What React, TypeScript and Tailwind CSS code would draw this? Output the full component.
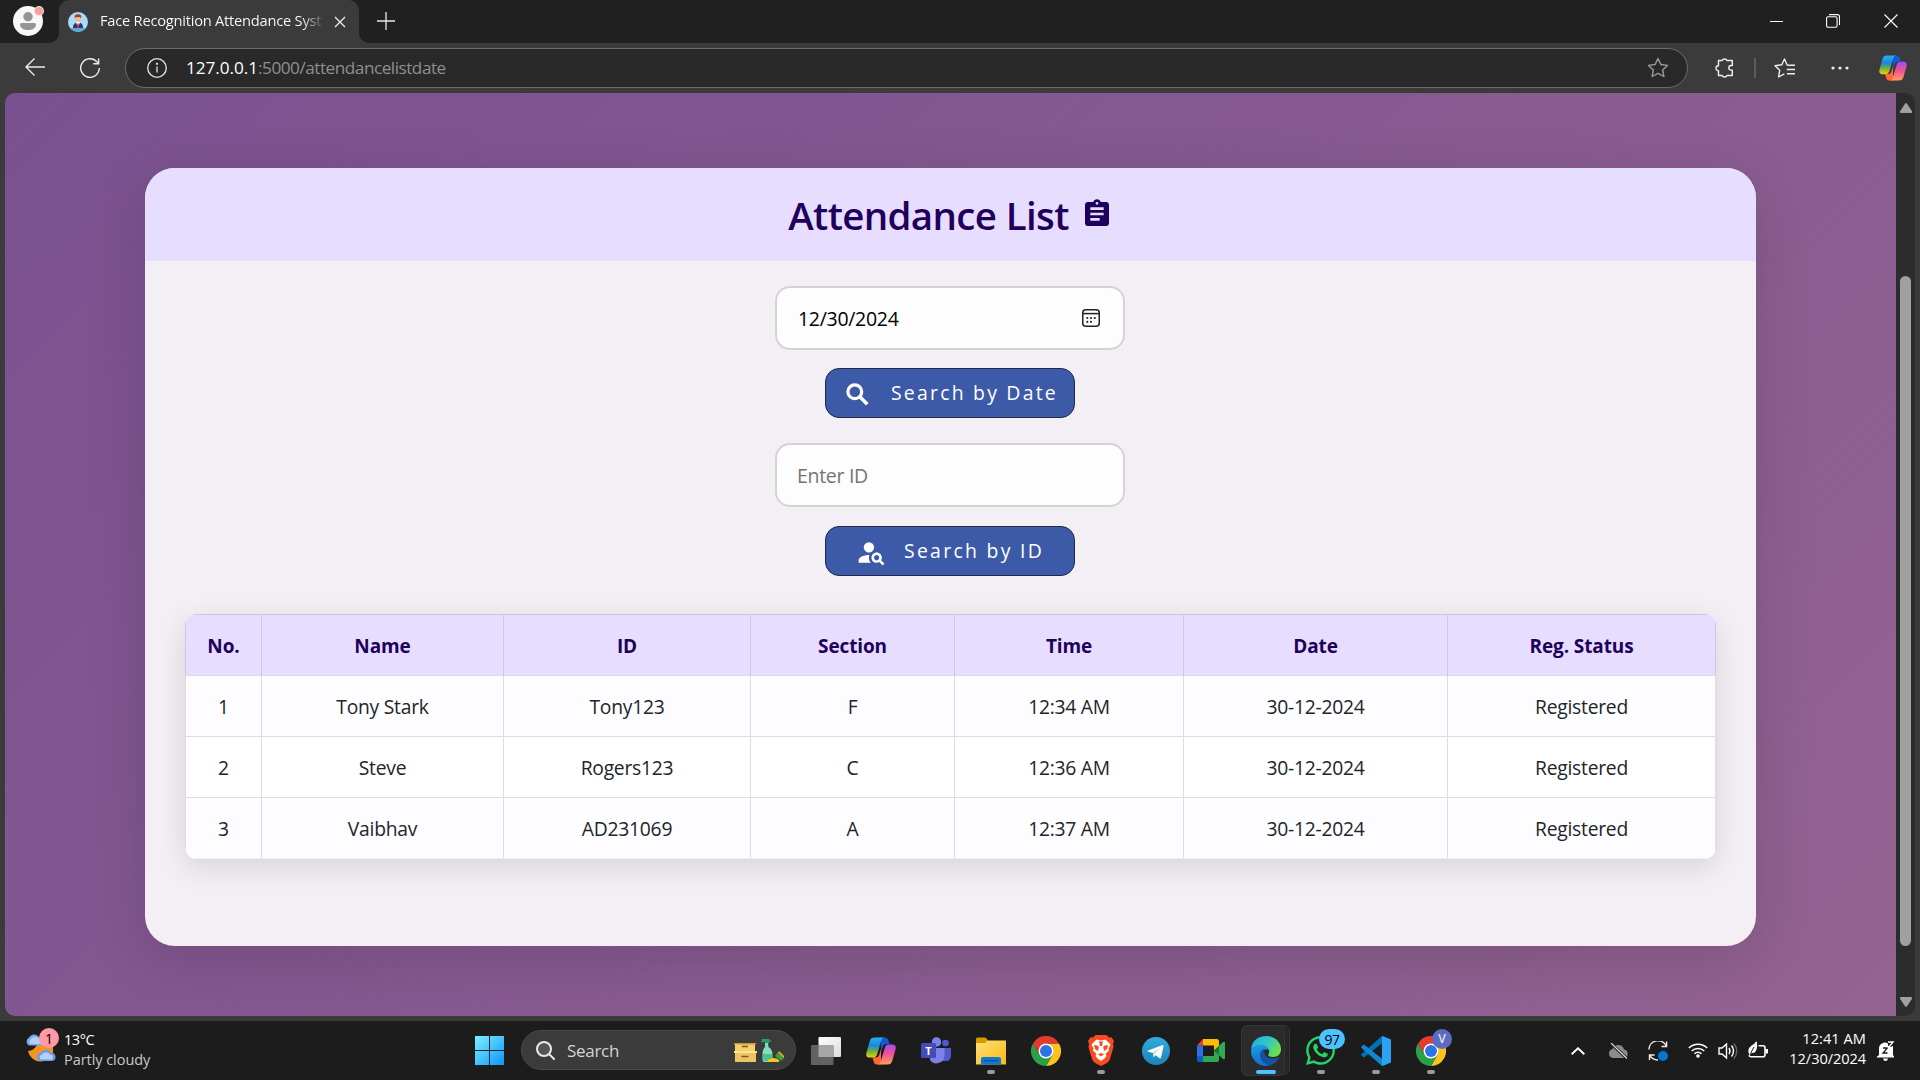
import React from "react";
import { MdAssignment, MdPersonSearch } from "react-icons/md";
import { FaWhatsapp } from "react-icons/fa";

const columns = ["No.", "Name", "ID", "Section", "Time", "Date", "Reg. Status"];
const rows = [
  ["1", "Tony Stark", "Tony123", "F", "12:34 AM", "30-12-2024", "Registered"],
  ["2", "Steve", "Rogers123", "C", "12:36 AM", "30-12-2024", "Registered"],
  ["3", "Vaibhav", "AD231069", "A", "12:37 AM", "30-12-2024", "Registered"],
];

function Copilot({ id, className }: { id: string; className: string }) {
  return (
    <svg viewBox="0 0 30 28" className={className}>
      <defs>
        <linearGradient id={id + "a"} x1="0" y1="0" x2="0" y2="1">
          <stop offset="0" stopColor="#22b4f4" />
          <stop offset=".4" stopColor="#1a86d8" />
          <stop offset=".7" stopColor="#6fb43f" />
          <stop offset="1" stopColor="#f7cf00" />
        </linearGradient>
        <linearGradient id={id + "b"} x1="0" y1="0" x2="0" y2="1">
          <stop offset="0" stopColor="#a748ee" />
          <stop offset=".5" stopColor="#f0568f" />
          <stop offset="1" stopColor="#ff9e5e" />
        </linearGradient>
      </defs>
      <path d="M15 .5h3.800c2 0 2.900.9 3.500 2.800l1.200 3.900h-3.200c-2.200 0-3 .9-3.600 2.900L15 15z" fill="#1558d6" />
      <path d="M15 27.500h-3.800c-2 0-2.900-.9-3.500-2.800L6.500 20.500h3c2.400 0 3.100-.8 3.800-3L15 12z" fill="#ff6a33" />
      <path d="M8.500.5h9.800c-1.800.2-2.500 1.300-3.100 3.300l-4 13.200c-.8 2.700-1.900 3.600-4.300 3.600H3.500C.8 20.600-.3 18.600.4 16L3.800 4C4.500 1.600 6 .5 8.500.5z" fill={"url(#" + id + "a)"} />
      <path d="M21.500 27.500h-9.800c1.800-.2 2.500-1.300 3.100-3.300l4-13.200c.8-2.700 1.900-3.600 4.300-3.600h3.400c2.700 0 3.800 2 3.100 4.600L26.200 24c-.7 2.400-2.200 3.500-4.700 3.500z" fill={"url(#" + id + "b)"} />
    </svg>
  );
}

function Chrome({ className }: { className: string }) {
  return (
    <svg viewBox="0 0 48 48" className={className}>
      <path d="M24 12h20.800A24 24 0 0 1 24 48l10.400-18z" fill="#fcc31e" />
      <path d="M34.400 30 24 48A24 24 0 0 1 3.200 12l10.400 18z" fill="#2aa147" />
      <path d="M24 12h20.800A24 24 0 0 0 3.200 12l10.400 18z" fill="#e33b2e" />
      <circle cx="24" cy="24" r="12" fill="#fff" />
      <circle cx="24" cy="24" r="9.600" fill="#2a73e8" />
    </svg>
  );
}

function TabStrip() {
  return (
    <div className="flex h-[43px] shrink-0 bg-[#202020]">
      <div className="h-full w-[59px] shrink-0 bg-[#3b3b3b]">
        <div className="h-full rounded-br-[10px] bg-[#202020] pl-[13px] pt-[6px]">
          <svg viewBox="0 0 31 30" className="h-[30px] w-[31px]">
            <circle cx="15" cy="15" r="15" fill="#f7f7f7" />
            <circle cx="15" cy="10.700" r="4.700" fill="#949494" />
            <path d="M8.500 17h13a1.500 1.500 0 0 1 1.500 1.500C23 22 19.500 24 15 24s-8-2-8-5.500A1.500 1.500 0 0 1 8.500 17z" fill="#949494" />
            <circle cx="26" cy="5" r="5" fill="#e8e8e8" />
            <circle cx="26" cy="5" r="4" fill="#ff9c97" />
          </svg>
        </div>
      </div>
      <div className="flex h-full w-[300px] items-center rounded-t-[10px] bg-[#3b3b3b] pl-[9px]">
        <svg viewBox="0 0 20 20" className="h-5 w-5">
          <defs><clipPath id="fav"><circle cx="10" cy="10" r="10" /></clipPath></defs>
          <g clipPath="url(#fav)">
            <rect width="20" height="20" fill="#a9dcf8" />
            <path d="M0 16h20v4H0z" fill="#63a5dd" />
            <path d="M5 16c0-4 2-5.500 5-5.500s5 1.500 5 5.500z" fill="#2c3a63" />
            <path d="m8 10 2 6 2-6z" fill="#fff" />
            <path d="m9.400 11.500-.5 3 1.100 1.500 1.100-1.500-.5-3z" fill="#d33" />
            <circle cx="10" cy="6.500" r="3.100" fill="#f6b893" />
            <path d="M6.700 6c-.3-3 1-3.700 3.300-3.700S13.600 3 13.300 6C12 4.500 8 4.500 6.700 6z" fill="#a3421f" />
          </g>
        </svg>
        <div className="-mt-[3px] ml-3 w-[224px] whitespace-nowrap bg-gradient-to-r from-white from-90% to-[#4a4a4a] bg-clip-text text-[14.700px] leading-5 tracking-[-0.250px] text-transparent">
          Face Recognition Attendance Syst
        </div>
        <svg viewBox="0 0 12 12" className="ml-[10px] h-3 w-3" stroke="#e8e8e8" strokeWidth="1.400"><path d="m1 1 10 10M11 1 1 11" /></svg>
      </div>
      <div className="flex-1 bg-[#3b3b3b]">
        <div className="flex h-full items-center rounded-bl-[10px] bg-[#202020] pb-[1px]">
          <svg viewBox="0 0 18 18" className="ml-[18px] h-[18px] w-[18px]" stroke="#e8e8e8" strokeWidth="1.300"><path d="M9 0v18M0 9h18" /></svg>
          <div className="ml-auto flex items-center pr-[22px]">
            <div className="mr-[43px] h-[1px] w-[13px] bg-white" />
            <svg viewBox="0 0 14 14" className="mr-[44px] h-[14px] w-[14px]" fill="none" stroke="#fff" strokeWidth="1.100"><rect x=".6" y="2.800" width="10.500" height="10.500" rx="1.500" /><path d="M3 .6h8.500a2 2 0 0 1 2 2V11" /></svg>
            <svg viewBox="0 0 14 14" className="h-[14px] w-[14px]" stroke="#fff" strokeWidth="1.100"><path d="m.5.5 13 13M13.500.5l-13 13" /></svg>
          </div>
        </div>
      </div>
    </div>
  );
}

function Toolbar() {
  return (
    <div className="flex h-[50px] shrink-0 items-center bg-[#3b3b3b]">
      <svg viewBox="0 0 20 18" className="-mt-[2px] ml-[25px] h-[18px] w-5" fill="none" stroke="#ececec" strokeWidth="1.400"><path d="M20 9H1M9.500.6 1 9l8.500 8.400" /></svg>
      <svg viewBox="0 0 20 20" className="ml-[35px] h-5 w-5" fill="none" stroke="#ececec" strokeWidth="1.400"><path d="M19.300 10A9.300 9.300 0 1 1 17 3.900L18.500 5.500M18.600.5v5.300h-5.300" /></svg>
      <div className="ml-[25px] flex h-10 w-[1563px] items-center rounded-full border border-[#6c6c6c] bg-[#292929]">
        <svg viewBox="0 0 20 20" className="ml-[21px] h-5 w-5" fill="none" stroke="#e4e4e4" strokeWidth="1.300"><circle cx="10" cy="10" r="9.300" /><path d="M10 8.500V14.500" /><circle cx="10" cy="5.800" r=".5" fill="#e4e4e4" /></svg>
        <div className="ml-[19px] whitespace-nowrap text-[17.200px] tracking-[-0.490px] text-[#8f8f8f]">
          <span className="tracking-[-0.050px] text-white">127.0.0.1</span>:5000/attendancelistdate
        </div>
        <svg viewBox="0 0 24 24" className="ml-auto mr-[17px] h-6 w-6" fill="none" stroke="#9a9a9a" strokeWidth="1.400" strokeLinejoin="round"><path d="m12 2.500 2.900 6 6.600.9-4.800 4.600 1.200 6.500-5.900-3.100-5.900 3.100 1.200-6.500L2.500 9.400l6.600-.9z" /></svg>
      </div>
      <svg viewBox="0 0 20 20" className="ml-[27px] h-5 w-5" fill="none" stroke="#efefef" strokeWidth="1.400" strokeLinejoin="round"><path d="M3.500 2.500H7.200a2.500 2 0 0 1 4.800 0h5.300v5h-1.200a2.300 2.300 0 0 0 0 4.600h1.200v5.400H12a2.500 2 0 0 1-4.800 0H3.500v-4.700a2.500 2.500 0 0 1 0-5z" /></svg>
      <div className="ml-[19px] h-5 w-[2px] bg-[#5b5b5b]" />
      <svg viewBox="0 0 22 22" className="ml-[18px] h-[22px] w-[22px]" fill="none" stroke="#efefef" strokeWidth="1.400" strokeLinejoin="round"><path d="M14.500 8.300 13.200 8 10.500 2 7.800 7.800 1 8.700l4.700 4.600L4.600 20l5.800-3.200M14.500 8.300H21M12.800 12.500H21M13 16.700h8" /></svg>
      <svg viewBox="0 0 18 4" className="ml-[35px] h-1 w-[18px]" fill="#efefef"><circle cx="2" cy="2" r="1.600" /><circle cx="9" cy="2" r="1.600" /><circle cx="16" cy="2" r="1.600" /></svg>
      <Copilot id="ct" className="ml-[30px] h-[26px] w-[28px]" />
    </div>
  );
}

function Scrollbar() {
  return (
    <div className="flex w-[19px] flex-col items-center rounded-r-[10px] bg-[#2c2c2c]">
      <svg viewBox="0 0 12 10" className="mt-[10px] h-[10px] w-3" fill="#a0a0a0"><path d="M5 .8a1.200 1.200 0 0 1 2 0l5 7.500A1.100 1.100 0 0 1 11 10H1a1.100 1.100 0 0 1-1-1.700z" /></svg>
      <div className="mt-[163px] h-[670px] w-[11px] rounded-full bg-[#a0a0a0]" />
      <svg viewBox="0 0 12 10" className="mb-[9px] mt-auto h-[10px] w-3 rotate-180" fill="#a0a0a0"><path d="M5 .8a1.200 1.200 0 0 1 2 0l5 7.500A1.100 1.100 0 0 1 11 10H1a1.100 1.100 0 0 1-1-1.700z" /></svg>
    </div>
  );
}

function SearchForm() {
  return (
    <div className="flex flex-col items-center pr-[1px]">
      <div className="mt-[25px] flex h-16 w-[350px] items-center justify-between rounded-[15px] border-2 border-[#d3d3d3] bg-[#fdfdfd] pl-[21px] pr-[23px]">
        <span className="pt-[2px] text-[19.500px] tracking-[-0.300px] text-black">12/30/2024</span>
        <svg viewBox="0 0 18 18" className="h-[18px] w-[18px]" fill="none" stroke="#222" strokeWidth="1.500">
          <rect x=".75" y=".75" width="16.500" height="16.500" rx="3" />
          <path d="M1 4.600h16" />
          <g fill="#222" stroke="none"><circle cx="5.300" cy="9" r="1.100" /><circle cx="9" cy="9" r="1.100" /><circle cx="12.800" cy="9" r="1.100" /><circle cx="5.300" cy="12.800" r="1.100" /><circle cx="9" cy="12.800" r="1.100" /></g>
        </svg>
      </div>
      <button className="mt-[18px] flex h-[50px] w-[250px] items-center rounded-[14px] border border-[#1c2a44] bg-[#3c5aa8] text-white">
        <svg viewBox="0 0 23 23" className="ml-[20px] mt-[2px] h-[23px] w-[23px]" fill="none" stroke="currentColor" strokeWidth="3.200"><circle cx="8.800" cy="8.800" r="6.900" /><path d="m13.600 13.600 7.700 7.700" strokeWidth="3.600" /></svg>
        <span className="ml-[22px] whitespace-nowrap text-[19.400px] tracking-[2.230px]">Search by Date</span>
      </button>
      <div className="mt-[25px] flex h-16 w-[350px] items-center rounded-[15px] border-2 border-[#d3d3d3] bg-[#fdfdfd] pl-[20px]">
        <span className="pt-[2px] text-[19.500px] tracking-[-0.300px] text-[#757575]">Enter ID</span>
      </div>
      <button className="mt-[19px] flex h-[50px] w-[250px] items-center rounded-[14px] border border-[#1c2a44] bg-[#3c5aa8] text-white">
        <MdPersonSearch className="ml-[30px] mt-[3px] h-[31px] w-[31px]" />
        <span className="ml-[17px] whitespace-nowrap text-[19.400px] tracking-[2.300px]">Search by ID</span>
      </button>
    </div>
  );
}

function AttendanceTable() {
  return (
    <div className="mx-10 mt-[38px] w-[1531px] overflow-hidden rounded-[12px] shadow-[0_8px_30px_rgba(0,0,0,0.12)]">
      <div className="grid h-[62px] grid-cols-[77px_242px_247px_204px_229px_264px_268px] border-y border-b-[#dcd8e4] border-t-[#cec5e2] bg-[#e7ddff]">
        {columns.map((c) => (
          <div key={c} className="flex items-center justify-center border-r border-[#cfc6e4] pt-[3px] text-[19px] font-bold tracking-[-0.120px] text-[#1f005c] first:border-l">
            {c}
          </div>
        ))}
      </div>
      {rows.map((r) => (
        <div key={r[0]} className="grid h-[61px] grid-cols-[77px_242px_247px_204px_229px_264px_268px] border-b border-[#dddde0] last:border-[#f0f0f2] odd:bg-white even:bg-[#fdfdff]">
          {r.map((v, i) => (
            <div key={i} className="flex items-center justify-center border-r border-[#dddde0] pt-[2px] text-[19.300px] tracking-[-0.250px] text-[#212529] first:border-l">
              {v}
            </div>
          ))}
        </div>
      ))}
    </div>
  );
}

function Page() {
  return (
    <div className="flex flex-1 overflow-hidden rounded-l-[10px] bg-[linear-gradient(135deg,#7a5190_0%,#936391_100%)]">
      <main className="ml-[140px] mt-[75px] h-[778px] w-[1611px] rounded-[30px] bg-[#f3eff4] shadow-[0_15px_60px_rgba(0,0,0,0.14)]">
        <h1 className="flex h-[93px] items-center justify-center rounded-t-[30px] bg-[#e7ddff] text-[38.500px] font-semibold text-[#1f005c]">
          <span className="mt-[3px] whitespace-nowrap tracking-[-0.650px]">Attendance List</span>
          <MdAssignment className="-mt-[2px] ml-[12px] h-8 w-8" />
        </h1>
        <SearchForm />
        <AttendanceTable />
      </main>
    </div>
  );
}

function Cell({ children, dot }: { children: React.ReactNode; dot?: boolean }) {
  return (
    <div className="relative flex w-[55px] items-center justify-center">
      {children}
      {dot && <span className="absolute bottom-[6px] h-1 w-2 rounded-full bg-[#9b9b9b]" />}
    </div>
  );
}

function Taskbar() {
  return (
    <div className="flex h-[59px] shrink-0 bg-[#1c1c1c] text-white">
      <div className="relative flex w-[462px] pl-[24px]">
        <svg viewBox="0 0 32 30" className="mt-[11px] h-[30px] w-8">
          <path d="M13 13A11 11 0 0 1 4 19a13 13 0 0 0 25 2V6z" fill="#f3951f" />
          <path d="M5 13.500a4.500 4.500 0 0 1 0-8A6 6 0 0 1 15 5a5 5 0 0 1 4 8.500z" fill="#7ea8ec" />
          <path d="M6 12a4 4 0 0 1 1-5c3-3 6-2 8 0 3 0 4 4 2 5z" fill="#b3cffa" />
          <path d="M17 29a4 4 0 0 1 0-8 5.500 5.500 0 0 1 10 0 4 4 0 0 1 1 8z" fill="#6d9ae5" />
          <path d="M17 27.500c-2-1-2-4 1-5 2-3 6-3 8 0 3 0 4 3 2 5z" fill="#b3cffa" />
        </svg>
        <span className="absolute left-[39px] top-[7px] flex h-5 w-5 items-center justify-center rounded-full bg-[#ff99a4] text-[14px] text-black">1</span>
        <div className="ml-2 mt-[9px] text-[14.500px] leading-5">
          <div className="tracking-[-0.450px]">13°C</div>
          <div className="whitespace-nowrap tracking-[-0.050px] text-[#c9c9c9]">Partly cloudy</div>
        </div>
      </div>
      <Cell>
        <svg viewBox="0 0 29 29" className="h-[29px] w-[29px]">
          <defs><linearGradient id="win" x1="0" y1="0" x2="1" y2="1"><stop offset="0" stopColor="#7cf0ff" /><stop offset="1" stopColor="#0c95ff" /></linearGradient></defs>
          <path d="M0 0h14v14H0zM15 0h14v14H15zM0 15h14v14H0zM15 15h14v14H15z" fill="url(#win)" />
        </svg>
      </Cell>
      <div className="ml-[4px] mt-[9px] flex h-10 w-[275px] items-center rounded-full border border-[#4a4a4a] bg-[#3b3b3b]">
        <svg viewBox="0 0 19 19" className="ml-[14px] h-[19px] w-[19px]" fill="none" stroke="#e9e9e9" strokeWidth="2"><circle cx="8" cy="8" r="7" fill="#555" /><path d="m13 13 5 5" strokeLinecap="round" /></svg>
        <span className="ml-[12px] mt-[2px] text-[17px] tracking-[-0.300px] text-[#d4d4d4]">Search</span>
        <svg viewBox="0 0 51 25" className="ml-auto mr-[11px] h-[25px] w-[51px]">
          <path d="M2 5h20v8H2z" fill="#f2d06e" /><path d="M1 5h22v1.500H1z" fill="#c99a35" />
          <path d="M1 13h23v2H1z" fill="#ffe28c" /><path d="M2 15h21v9H2z" fill="#edc564" />
          <path d="M9 8.500h6M8.500 18.500h7" stroke="#7a5a22" strokeWidth="1.500" />
          <path d="M29 1h7l3 3-3-.5v2h-4V4l-4 .5z" fill="#2f9a70" /><path d="M32 5h3l.5 4c3 2 4 4 4 8v5q0 2-2 2h-6q-2 0-2-2v-5c0-4 .5-6 2.500-8z" fill="#7fe0b6" />
          <path d="M30 16h9v5q0 2-2 2h-5q-2 0-2-2z" fill="#4fbf93" />
          <path d="m42 18 3-4 6 6-3 3z" fill="#3a9f3c" /><path d="m45 14 1.500-.5L51 18v2z" fill="#f3c11d" /><path d="M35 22q6-4 11 0v2H35z" fill="#f5c518" />
        </svg>
      </div>
      <div className="ml-[2px] flex">
        <Cell>
          <svg viewBox="0 0 30 28" className="h-7 w-[30px]">
            <defs><linearGradient id="tv" x1="0" y1="0" x2="1" y2="1"><stop offset="0" stopColor="#fff" /><stop offset="1" stopColor="#dcdcdc" /></linearGradient></defs>
            <rect x="7.500" y="0" width="22.500" height="20" rx="1" fill="url(#tv)" /><rect y="8" width="22.500" height="20" rx="1" fill="#626262" /><path d="M7.500 8h15v12h-15z" fill="#a6a6a6" />
          </svg>
        </Cell>
        <Cell><Copilot id="cb" className="h-7 w-[30px]" /></Cell>
        <Cell>
          <svg viewBox="0 0 30 28" className="h-7 w-[30px]">
            <circle cx="24.500" cy="6" r="3.300" fill="#5059c9" /><path d="M21 11h9v7c0 4-2 6-5 6h-4z" fill="#5059c9" />
            <circle cx="15.500" cy="5" r="4.700" fill="#7b83eb" /><path d="M9 11h14.500v8a8 8 0 0 1-14.500 4z" fill="#7b83eb" />
            <rect y="6" width="15" height="15" rx="1.500" fill="#444cb5" />
            <text x="7.500" y="17.500" fontSize="11" fontWeight="700" fill="#fff" textAnchor="middle">T</text>
          </svg>
        </Cell>
        <Cell dot>
          <svg viewBox="0 0 30 28" className="h-7 w-[30px]">
            <defs><linearGradient id="fo" x1="0" y1="0" x2="1" y2="1"><stop offset="0" stopColor="#ffe07a" /><stop offset="1" stopColor="#fbb910" /></linearGradient></defs>
            <path d="M0 2q0-1.500 1.500-1.500h8L12.500 4v5H0z" fill="#dd9a00" /><path d="M0 6h9l3-2.500h18V27.500H0z" fill="url(#fo)" />
            <path d="M5 27.500V22q0-2 2-2h16q2 0 2 2v5.500z" fill="#0f7ad0" /><path d="M8 23.700h14" stroke="#0a4f94" strokeWidth="1.200" />
          </svg>
        </Cell>
        <Cell><Chrome className="h-[30px] w-[30px]" /></Cell>
        <Cell dot>
          <svg viewBox="0 0 26 31" className="h-[31px] w-[26px]">
            <path d="M7.500 0h11L21 2.500l2.500-.3L26 6l-1 3 .5 3-3.500 12q-1 3-4 4.500L13 31l-5-2.500Q5 27 4 24L.5 12 1 9 0 6l2.500-3.800 2.500.3z" fill="#fb4a1d" />
            <path d="m8.500 4.500 4.500 1 4.500-1 5 5-2 4 .5 2-3.500 3.500 1 2-2 2.500-3.500 2.500-3.500-2.500-2-2.500 1-2L5 15.500l.5-2-2-4z" fill="#fff" />
            <path d="m6 10 4 .8.8 1.600-1 3.600L7 14zM20 10l-4 .8-.8 1.600 1 3.600L19 14zM10 19.200l3-1.200 3 1.200-3 2.300zM11 6l2 .8L15 6l-1 5h-2z" fill="#fb4a1d" />
          </svg>
        </Cell>
        <Cell>
          <svg viewBox="0 0 28 28" className="h-7 w-7">
            <defs><linearGradient id="tg" x1="0" y1="0" x2="0" y2="1"><stop offset="0" stopColor="#33abdf" /><stop offset="1" stopColor="#1b83b8" /></linearGradient></defs>
            <circle cx="14" cy="14" r="14" fill="url(#tg)" /><path d="M5.500 13.800 20.700 8q1.100-.2.800 1.200l-2.500 11.500q-.4 1.200-1.500.5l-3.800-2.900-2 2-.9-4.400-4.900-1.400q-1-.3-.4-.7z" fill="#fff" /><path d="m11 15.800 7.500-5.300-6 6-.5 2.900z" fill="#a9cfe3" />
          </svg>
        </Cell>
        <Cell>
          <svg viewBox="0 0 28 23" className="h-[23px] w-7">
            <path d="M6 0v6.500H0z" fill="#e94235" /><path d="M0 6.500h6V17H0z" fill="#2c6fe8" /><path d="M0 17h6v6H2q-2 0-2-2z" fill="#1459c8" />
            <path d="M6 0h13.500Q22 0 22 2v5l-5 4.500v-5H6z" fill="#fbbb06" /><path d="M6 17h11v-5.500l5 4.500v5q0 2-2 2H6z" fill="#2fa84f" />
            <path d="m17 11.500 9-8.500q2-1 2 1v15q0 2-2 1z" fill="#35a852" /><path d="m17 11.500 5-4.500v9z" fill="#0d7a30" />
          </svg>
        </Cell>
        <div className="relative flex w-[55px] items-center justify-center">
          <span className="absolute left-[8px] top-1 h-[50px] w-[44px] rounded-[6px] border border-[#363636] bg-[#262626]" />
          <span className="absolute left-[3px] top-1 h-[51px] w-[44px] rounded-[6px] border border-[#363636] bg-[#2b2b2b]" />
          <svg viewBox="0 0 30 30" className="relative h-[30px] w-[30px]">
            <defs>
              <linearGradient id="e1" x1="0" y1="0" x2="1" y2=".6"><stop offset="0" stopColor="#1fa8e0" /><stop offset=".5" stopColor="#2fc6c9" /><stop offset="1" stopColor="#6be04c" /></linearGradient>
              <linearGradient id="e2" x1="0" y1="0" x2="0" y2="1"><stop offset="0" stopColor="#1b9de2" /><stop offset="1" stopColor="#0d6fd0" /></linearGradient>
            </defs>
            <path d="M0 13C1 5 7 0 15 0c9 0 15 6 15 13 0 5-3 8-8 8-4 0-5.500-1.500-4.500-3 2-3 0-7.500-6-8C6 9.700 2 11 0 13z" fill="url(#e1)" />
            <path d="M0 14C2 10 6 8.500 10.500 8.800c4 .2 7 2.400 8 5.200C12 12 8 17 10 22c1.500 4 5 6.500 9.500 7Q17 30 15 30C7 30-.5 23 0 14z" fill="url(#e2)" />
            <path d="M13.500 12.500C9 14.500 8 19 10 23c2 4 6 6 9.500 6 4-1.200 7-4 8.700-7 .3-.8-.3-1.200-1-.8-6 2.800-14 .8-14-6.200 0-1 .2-2 .3-2.500z" fill="#12529f" />
          </svg>
          <span className="absolute bottom-[6px] left-[18px] h-1 w-5 rounded-full bg-[#4cc2ff]" />
        </div>
        <Cell dot>
          <FaWhatsapp className="h-[33px] w-[33px] text-[#25d366]" />
          <span className="absolute left-[26px] top-[8px] flex h-5 w-[26px] items-center justify-center rounded-full bg-[#4cc2ff] text-[14px] tracking-[-0.500px] text-black">97</span>
        </Cell>
        <Cell dot>
          <svg viewBox="0 0 30 30" className="h-[30px] w-[30px]">
            <path d="m22 6.500-19 15L.5 19.500q-.8-.8 0-1.500L21 0z" fill="#0070bb" /><path d="M22 23.500 3 8.500.5 10.500q-.8.8 0 1.500L21 30z" fill="#1086d0" />
            <path d="M21.500 0 30 3.500v23L21.500 30q-.6-.3-.6-1V1q0-.7.600-1z" fill="#2aa4f0" />
          </svg>
        </Cell>
        <Cell dot>
          <Chrome className="h-[30px] w-[30px]" />
          <span className="absolute left-[29px] top-[8px] flex h-5 w-5 items-center justify-center rounded-full bg-[#5c6bc0] text-[12px] font-semibold text-[#dfe2f5]">V</span>
        </Cell>
      </div>
      <div className="ml-auto flex items-center pr-[25px]">
        <svg viewBox="0 0 14 8" className="h-2 w-[14px]" fill="none" stroke="#fff" strokeWidth="1.900"><path d="m.7 7.300 6.300-6 6.300 6" /></svg>
        <svg viewBox="0 0 20 16" className="ml-[23px] h-4 w-5"><path d="M5 15a4.600 4.600 0 0 1-.5-9 6 6 0 0 1 11.500.5A4.300 4.300 0 0 1 16 15z" fill="#8b8b8b" /><path d="m3 .5 16 15" stroke="#1c1c1c" strokeWidth="3" /><path d="m3 0 16 15.500" stroke="#ddd" strokeWidth="1.200" /></svg>
        <svg viewBox="0 0 20 20" className="ml-5 h-5 w-5" fill="none" stroke="#eee" strokeWidth="1.400"><path d="M.8 8.500A9.200 9.200 0 0 1 18.300 5M18.600.5V5.500H13.500M1.500 19v-5h5M1.700 14.200A9.300 9.300 0 0 0 10 19" /><circle cx="15" cy="15" r="5" fill="#0078d7" stroke="none" /></svg>
        <svg viewBox="0 0 20 16" className="-mt-[2px] ml-5 h-4 w-5" fill="none" stroke="#fff" strokeWidth="1.500"><path d="M.8 6a13 13 0 0 1 18.400 0M3.700 9a9 9 0 0 1 12.600 0M6.500 11.800a5 5 0 0 1 7 0" /><circle cx="10" cy="14" r="1.800" fill="#fff" stroke="none" /></svg>
        <svg viewBox="0 0 20 18" className="ml-[10px] h-[18px] w-5" fill="none" strokeWidth="1.400"><path d="M1 6h3l4.500-4v14L4 12H1z" stroke="#fff" /><path d="M11 6q2 3 0 6M13.500 3.500q4 5.500 0 11" stroke="#fff" /><path d="M16 1.500q5.500 7.500 0 15" stroke="#666" /></svg>
        <svg viewBox="0 0 20 18" className="-mt-[2px] ml-[10px] h-[18px] w-5" fill="none" stroke="#fff" strokeWidth="1.600"><path d="M10.500 4.800H15q2 0 2 2v7q0 2-2 2H3q-1.500 0-2-1.500" /><path d="M17.500 8h2.500v4.500h-2.500z" fill="#fff" stroke="none" /><path d="M8.500 0q1.500 5-.3 9.500Q6.800 12.500 3.500 12L1.500 14 1 12.800q-1.500-3 .3-6Q3.500 4 6 3z" fill="#fff" stroke="none" /><path d="M2.500 12.500 6 6" stroke="#1c1c1c" strokeWidth="1" /></svg>
        <div className="mb-[5px] ml-[20px] w-[78px] whitespace-nowrap text-[14.600px] leading-5">
          <div className="flex justify-end tracking-[0.050px]">12:41 AM</div>
          <div className="flex justify-end tracking-[-0.080px]">12/30/2024</div>
        </div>
        <svg viewBox="0 0 18 20" className="ml-[11px] h-5 w-[18px]"><path d="M2 14V8a6 6 0 0 1 9-5.500V5h5v9l1 1.500v1H0v-1zM6 17.500h5Q10.500 20 8.500 20T6 17.500z" fill="#fff" /><path d="M6 7h4.500L6 12h4.500" stroke="#1c1c1c" strokeWidth="1.300" fill="none" /><path d="M11 1h5l-4.500 5.500H16" stroke="#fff" strokeWidth="1.400" fill="#1c1c1c" /></svg>
      </div>
    </div>
  );
}

export default function App() {
  return (
    <div className="flex h-[1080px] w-[1920px] flex-col overflow-hidden bg-[#3b3b3b] font-['Open_Sans','Noto_Sans',sans-serif]">
      <TabStrip />
      <Toolbar />
      <div className="flex h-[923px] shrink-0 pl-[5px] pr-[5px]">
        <Page />
        <Scrollbar />
      </div>
      <div className="h-[5px] shrink-0 bg-[#3b3b3b]" />
      <Taskbar />
    </div>
  );
}
